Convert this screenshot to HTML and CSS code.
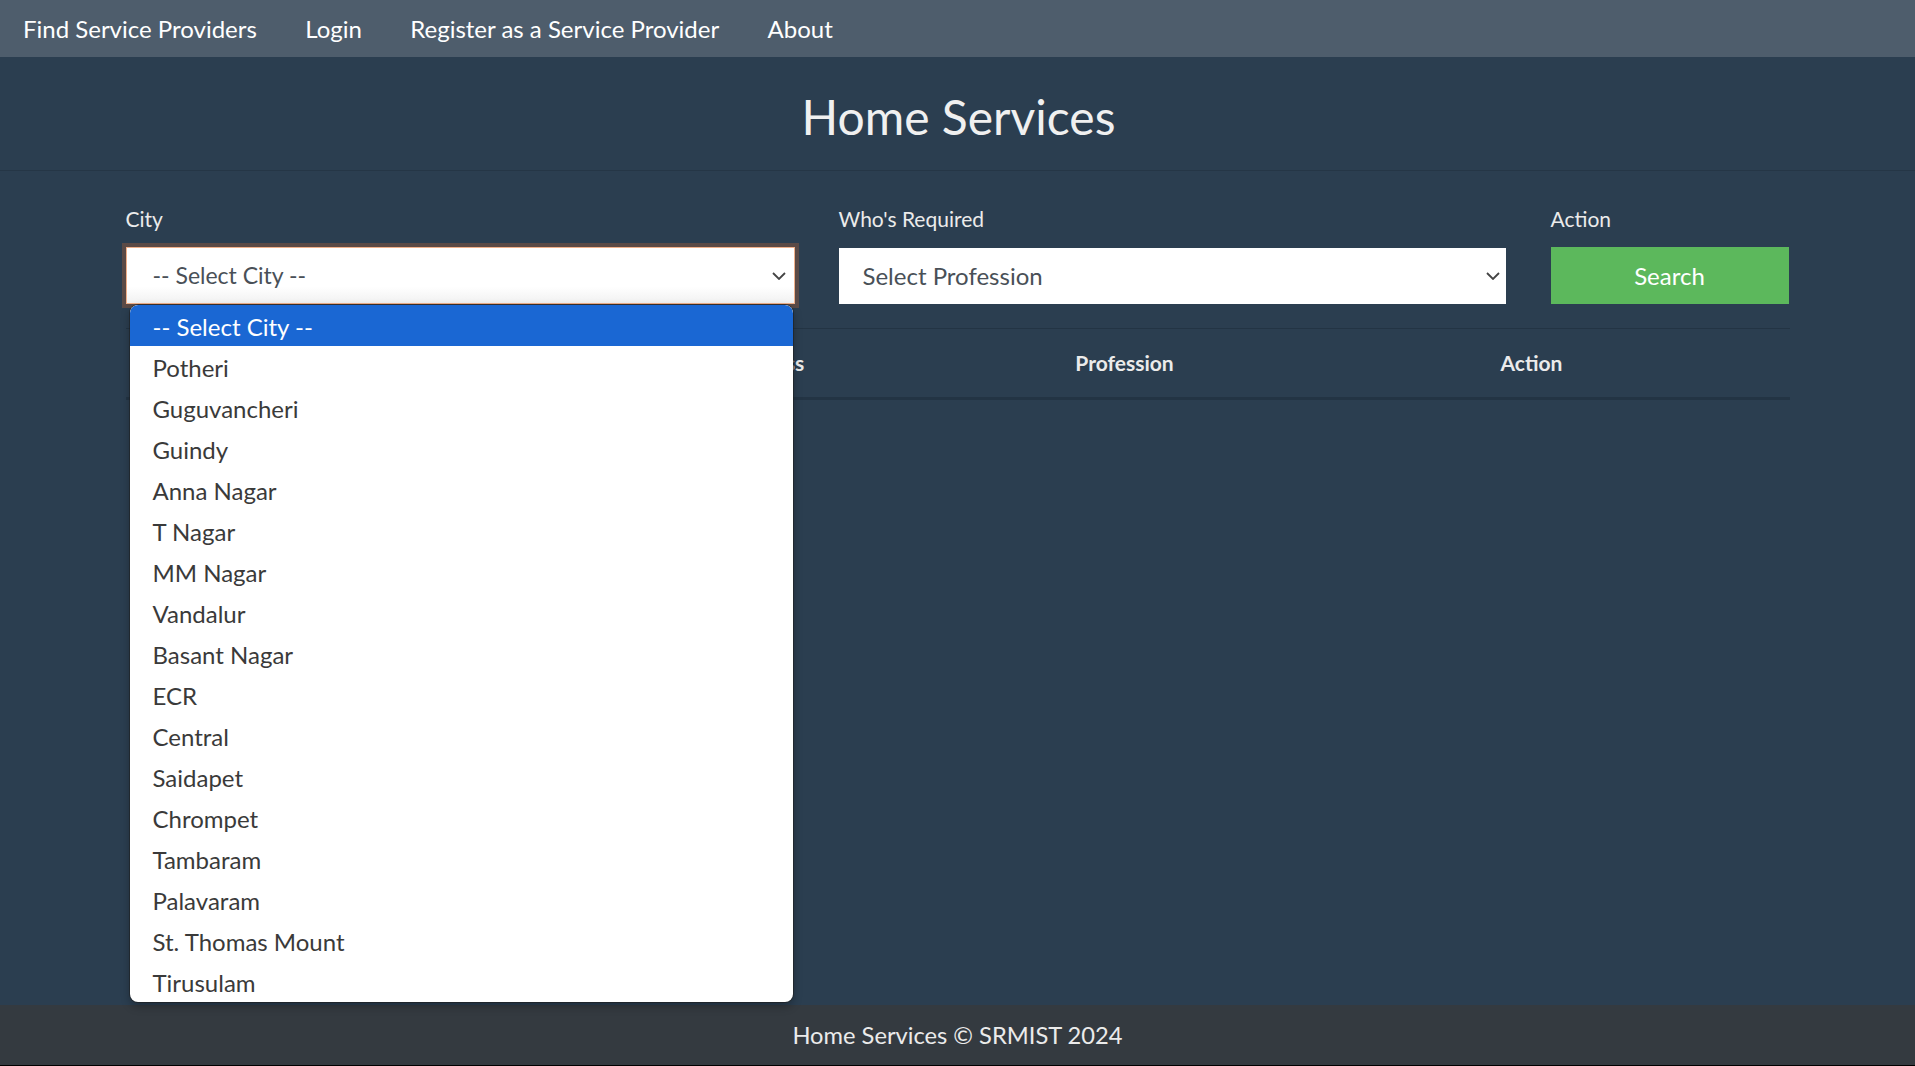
FILE: index.html
```html
<!DOCTYPE html>
<html lang="en">
<head>
<meta charset="utf-8">
<title>Home Services</title>
<link rel="stylesheet" href="styles.css">
</head>
<body>
<nav class="topnav">
  <a class="nav-link" href="#">Find Service Providers</a>
  <a class="nav-link" href="#">Login</a>
  <a class="nav-link" href="#">Register as a Service Provider</a>
  <a class="nav-link" href="#">About</a>
</nav>
<main class="main">
  <header class="page-header">
    <h1 class="title">Home Services</h1>
  </header>
  <section class="container">
    <div class="search-grid">
      <div class="field field-city">
        <label class="label">City</label>
        <div class="select select-focus">
          <span class="select-text">-- Select City --</span>
          <svg class="chev" width="14" height="8" viewBox="0 0 14 8"><polyline points="1,1 7,7 13,1" fill="none" stroke="#444" stroke-width="1.8"/></svg>
        </div>
        <ul class="dropdown">
          <li class="opt opt-active">-- Select City --</li>
          <li class="opt">Potheri</li>
          <li class="opt">Guguvancheri</li>
          <li class="opt">Guindy</li>
          <li class="opt">Anna Nagar</li>
          <li class="opt">T Nagar</li>
          <li class="opt">MM Nagar</li>
          <li class="opt">Vandalur</li>
          <li class="opt">Basant Nagar</li>
          <li class="opt">ECR</li>
          <li class="opt">Central</li>
          <li class="opt">Saidapet</li>
          <li class="opt">Chrompet</li>
          <li class="opt">Tambaram</li>
          <li class="opt">Palavaram</li>
          <li class="opt">St. Thomas Mount</li>
          <li class="opt">Tirusulam</li>
        </ul>
      </div>
      <div class="field">
        <label class="label">Who's Required</label>
        <div class="select select-prof">
          <span class="select-text">Select Profession</span>
          <svg class="chev" width="14" height="8" viewBox="0 0 14 8"><polyline points="1,1 7,7 13,1" fill="none" stroke="#444" stroke-width="1.8"/></svg>
        </div>
      </div>
      <div class="field field-action">
        <label class="label">Action</label>
        <button class="btn-search">Search</button>
      </div>
    </div>
    <table class="results">
      <thead>
        <tr>
          <th class="c1">Name</th>
          <th class="c2">Address</th>
          <th class="c3">Profession</th>
          <th class="c4">Action</th>
        </tr>
      </thead>
    </table>
  </section>
</main>
<footer class="footer">Home Services © SRMIST 2024</footer>
</body>
</html>
```
FILE: styles.css
```css
* { box-sizing: border-box; }
html, body { height: 100%; }
body {
  margin: 0;
  background: #2b3e50;
  color: #ebebeb;
  font-family: Lato, "Open Sans", sans-serif;
  display: flex;
  flex-direction: column;
  min-height: 100vh;
}
.topnav {
  height: 57px;
  background: #4e5d6c;
  display: flex;
  align-items: center;
  padding-bottom: 1px;
}
.nav-link {
  color: #ffffff;
  text-decoration: none;
  font-size: 24px;
  padding: 0 24.2px;
}
.nav-link:first-child { padding-left: 23px; }
.main { flex: 1; }
.page-header {
  height: 114px;
  display: flex;
  align-items: center;
  justify-content: center;
  border-bottom: 1px solid rgba(0,0,0,0.12);
}
.title {
  margin: 0;
  font-weight: 400;
  font-size: 48px;
  color: #f0f0f0;
  padding-top: 6px;
  padding-left: 2px;
}
.container {
  width: 1664px;
  margin: 0 auto;
  padding-top: 36px;
}
.search-grid {
  display: grid;
  grid-template-columns: 669px 667px 239px;
  column-gap: 44px;
}
.field-action { margin-left: 1px; }
.field { position: relative; display: flex; flex-direction: column; }
.label {
  font-size: 21px;
  line-height: 24px;
  margin-bottom: 16px;
  color: #ebebeb;
}
.select {
  height: 57px;
  background: linear-gradient(#ffffff 70%, #f1f1f1);
  display: flex;
  align-items: center;
  justify-content: space-between;
  color: #495057;
  font-size: 24px;
}
.select-focus {
  border: 1px solid #f0b08a;
  box-shadow: 0 0 0 4px #5b4a46;
  padding: 0 8px 0 26px;
  font-size: 23px;
}
.select-prof {
  height: 56px;
  margin-top: 1px;
  padding: 0 6px 0 24px;
  background: #ffffff;
}
.select-text { line-height: 1; }
.chev { display: block; }
.btn-search {
  height: 57px;
  background: #5cb85c;
  border: none;
  color: #ffffff;
  font-family: Lato, sans-serif;
  font-size: 24px;
}
.dropdown {
  position: absolute;
  top: 98px;
  left: 4px;
  width: 663px;
  margin: 0;
  padding: 0;
  list-style: none;
  background: #ffffff;
  border-radius: 8px;
  box-shadow: 0 0 0 1px rgba(30,30,30,0.55), 0 4px 10px rgba(0,0,0,0.3);
  overflow: hidden;
  z-index: 10;
}
.opt {
  height: 41px;
  line-height: 43px;
  padding-left: 23px;
  font-size: 24px;
  color: #3a3a3a;
}
.opt-active {
  background: #1a67d3;
  color: #ffffff;
  border-radius: 8px 8px 0 0;
}
.results {
  width: 100%;
  margin-top: 24px;
  border-collapse: collapse;
  border-top: 1px solid #233444;
  border-bottom: 3px solid #233444;
}
.results th {
  height: 70px;
  padding-bottom: 2px;
  font-size: 21px;
  font-weight: 700;
  color: #ebebeb;
  text-align: center;
}
.c1 { width: 432px; }
.c2 { width: 418px; }
.c3 { width: 298px; }
.c4 { width: 516px; }
.footer {
  height: 61px;
  background: #343a40;
  display: flex;
  align-items: center;
  justify-content: center;
  font-size: 23.7px;
  color: #ebebeb;
  border-bottom: 1px solid #000;
}
```
